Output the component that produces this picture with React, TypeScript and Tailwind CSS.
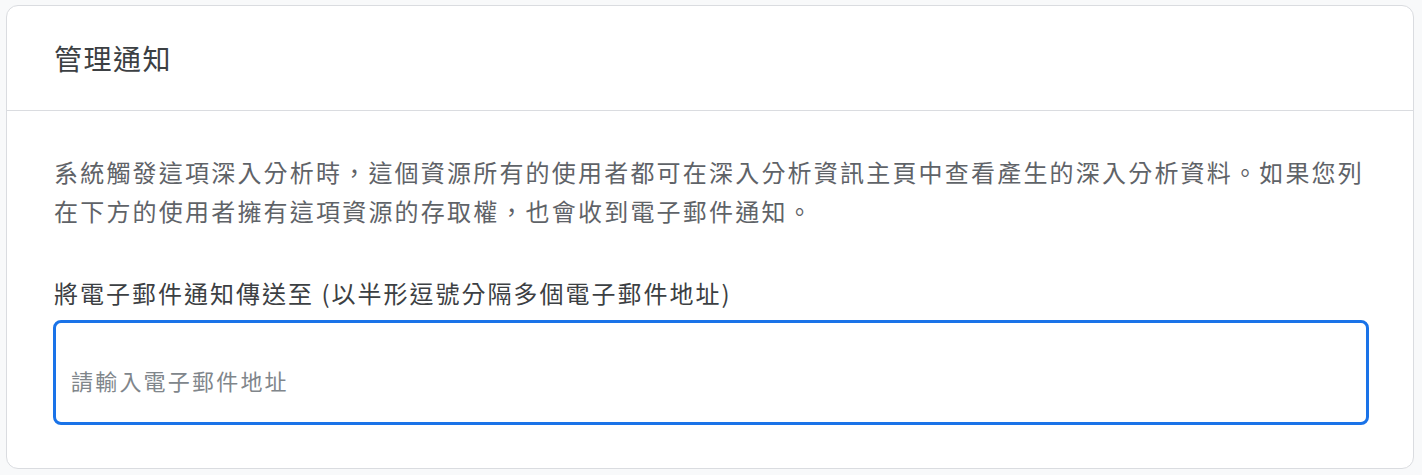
import { useState } from 'react';

const CJK = "font-['Noto_Sans_CJK_TC','Noto_Sans',sans-serif]";

export default function App() {
    const [emails, setEmails] = useState('');

    return (
        <div className={`min-h-[475px] bg-[#f8f9fa] pt-[5px] pl-[6px] pr-[8px] pb-[6px] ${CJK}`}>
            <div className="rounded-xl border border-[#dadce0] bg-white">
                {/* Header */}
                <div className="h-[105px] flex items-center px-[47px] border-b border-[#dadce0]">
                    <h2 className="text-[28px] tracking-[1.5px] text-[#3c4043] font-normal">管理通知</h2>
                </div>

                {/* Body */}
                <div className="pl-[46px] pr-[44px] pt-[41px] pb-[43px]">
                    <p className="text-[24px] leading-[39px] tracking-[2.2px] text-[#5f6368] pl-px">
                        系統觸發這項深入分析時，這個資源所有的使用者都可在深入分析資訊主頁中查看產生的深入分析資料。如果您列在下方的使用者擁有這項資源的存取權，也會收到電子郵件通知。
                    </p>

                    <label htmlFor="emails" className="block mt-[45px] mb-[9px] pl-px text-[24px] leading-[36px] tracking-[2px] text-[#3c4043]">
                        將電子郵件通知傳送至 (以半形逗號分隔多個電子郵件地址)
                    </label>
                    <input
                        id="emails"
                        autoFocus
                        value={emails}
                        onChange={(e) => setEmails(e.target.value)}
                        placeholder="請輸入電子郵件地址"
                        className="block box-border w-full h-[105px] rounded-lg border-[3px] border-[#1a73e8] pl-[15px] pr-4 pt-[14px] text-[22px] tracking-[2.2px] text-[#3c4043] placeholder:text-[#80868b] caret-[#1a73e8] outline-none"
                    />
                </div>
            </div>
        </div>
    );
}
